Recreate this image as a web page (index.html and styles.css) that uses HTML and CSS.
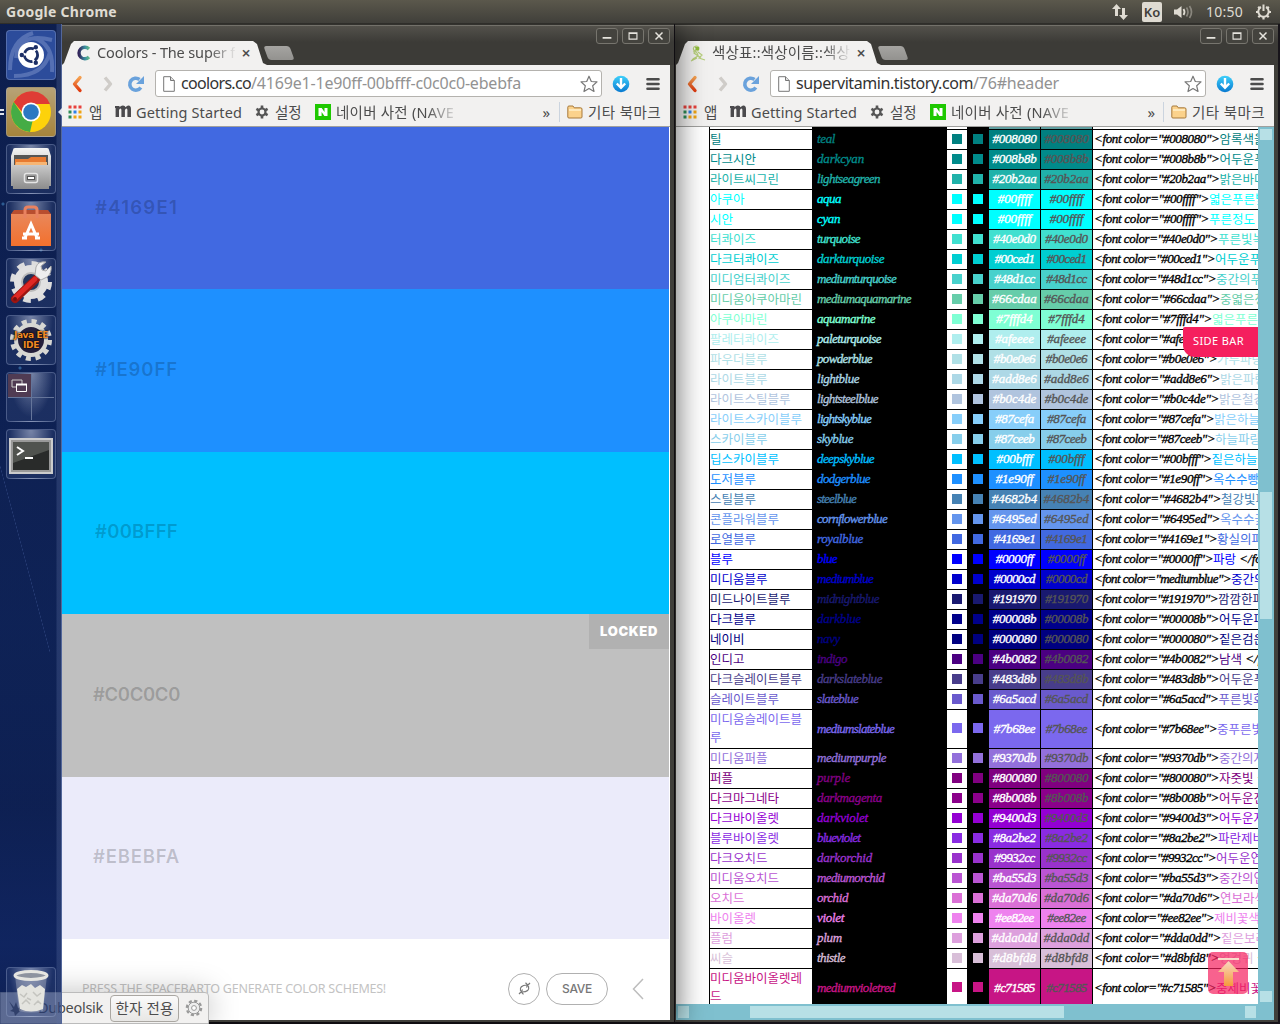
FILE: index.html
```html
<!DOCTYPE html>
<html lang="ko">
<head>
<meta charset="utf-8">
<title>Google Chrome</title>
<link rel="stylesheet" href="styles.css">
</head>
<body>
<svg class="defs" width="0" height="0">
  <defs>
    <linearGradient id="orange" x1="0" y1="0" x2="0" y2="1"><stop offset="0" stop-color="#f5a050"/><stop offset="1" stop-color="#e03c10"/></linearGradient>
    <linearGradient id="metal" x1="0" y1="0" x2="0" y2="1"><stop offset="0" stop-color="#f4f4f4"/><stop offset="1" stop-color="#9a9a9a"/></linearGradient>
    <linearGradient id="drawer" x1="0" y1="0" x2="0" y2="1"><stop offset="0" stop-color="#c9c9c9"/><stop offset="1" stop-color="#8c8c8c"/></linearGradient>
    <linearGradient id="bag" x1="0" y1="0" x2="0" y2="1"><stop offset="0" stop-color="#e9875a"/><stop offset="1" stop-color="#f3702d"/></linearGradient>
    <linearGradient id="arrow" x1="0" y1="0" x2="0" y2="1"><stop offset="0" stop-color="#f9e0d0"/><stop offset="1" stop-color="#f59a3c"/></linearGradient>
    <linearGradient id="cool" x1="0" y1="0" x2="1" y2="0"><stop offset="0" stop-color="#33265b"/><stop offset=".6" stop-color="#3b8fa0"/><stop offset="1" stop-color="#63b887"/></linearGradient>
    <linearGradient id="dl" x1="0" y1="0" x2="0" y2="1"><stop offset="0" stop-color="#3fd0fb"/><stop offset="1" stop-color="#0879d0"/></linearGradient>
  </defs>
  <symbol id="back" viewBox="0 0 12 18"><path d="M9 2.500 3.500 9 9 15.500" fill="none" stroke="url(#orange)" stroke-width="3.400" stroke-linecap="round" stroke-linejoin="round"/></symbol>
  <symbol id="fwd" viewBox="0 0 12 18"><path d="M3 2.500 8.500 9 3 15.500" fill="none" stroke="#cfccc8" stroke-width="3.400" stroke-linejoin="round"/></symbol>
  <symbol id="reload" viewBox="0 0 18 18"><path d="M13.800 12.500A6 6 0 1 1 12.500 4.500" fill="none" stroke="#6aa2dc" stroke-width="3.600"/><path d="M17 1v8H9z" fill="#6aa2dc"/></symbol>
  <symbol id="page" viewBox="0 0 12 16"><path d="M.7.7h6.800l3.800 3.800v10.800H.7z" fill="#fff" stroke="#777"/><path d="M7.500.7v3.800h3.800" fill="#ddd" stroke="#777"/></symbol>
  <symbol id="star" viewBox="0 0 18 18"><path d="m9 1.200 2.300 5.300 5.700.4-4.300 3.900 1.300 5.700L9 13.500l-5 3 1.300-5.700L1 6.900l5.700-.4z" fill="#fff" stroke="#777" stroke-width="1.200" stroke-linejoin="round"/></symbol>
  <symbol id="down" viewBox="0 0 18 18"><circle cx="9" cy="9" r="8.300" fill="url(#dl)"/><path d="M9 3v9M4.800 8.500 9 12.800l4.200-4.300" fill="none" stroke="#fff" stroke-width="2.400"/></symbol>
  <symbol id="menu" viewBox="0 0 14 14"><path d="M1.500 2.200h11M1.500 7h11M1.500 11.800h11" stroke="#4c4c4c" stroke-width="2.600" stroke-linecap="round"/></symbol>
  <symbol id="apps" viewBox="0 0 14 14"><path d="M.5.500h3v3h-3zM5.500.500h3v3h-3zM10.500.500h3v3h-3z" fill="#e8413b"/><path d="M.5 5.500h3v3h-3zM.5 10.500h3v3h-3z" fill="#2d8c56"/><path d="M5.500 5.500h3v3h-3z" fill="#2f80e8"/><path d="M10.500 5.500h3v3h-3zM5.500 10.500h3v3h-3zM10.500 10.500h3v3h-3z" fill="#f0a411"/></symbol>
  <symbol id="moz" viewBox="0 0 16 13"><path d="M0 1h4.500v1.300Q6 .5 8 .6q2 .1 2.600 1.700Q12 .5 13.500.6 16 .8 16 4v8h-3.600V5q0-1.500-1-1.500T9.900 5.200V12H6.400V5q0-1.500-1-1.500T4 5.200V12H.6V3H0z" fill="#4b4a4d"/></symbol>
  <symbol id="gear" viewBox="0 0 16 16"><path d="M8 1.500v3M8 11.500v3M2.400 4.800l2.600 1.500M11 9.700l2.600 1.500M2.400 11.200 5 9.700M11 6.300l2.600-1.500" stroke="#555" stroke-width="2.600"/><circle cx="8" cy="8" r="3.500" fill="none" stroke="#555" stroke-width="2.200"/></symbol>
  <symbol id="naver" viewBox="0 0 16 16"><path d="M0 0h16v16H0z" fill="#1ec800"/><path d="M3.500 4h3.200L9.500 8V4h3v8H9.400L6.600 8v4H3.500z" fill="#fff"/></symbol>
  <symbol id="folder" viewBox="0 0 16 14"><path d="M.8 12V2.200Q.8 1 2 1h4l1.200 1.800h6.300q1.500 0 1.500 1.300V12q0 1-1.200 1H2Q.8 13 .8 12z" fill="#fbd28c" stroke="#a77a3c"/><path d="M2 5h12" stroke="#fff0cd" stroke-width="1.500"/></symbol>
  <symbol id="min" viewBox="0 0 22 16"><path d="M6 10h10" stroke="#e6e4de" stroke-width="2"/></symbol>
  <symbol id="max" viewBox="0 0 22 16"><path d="M6.500 4.500h9v7h-9zM6 5.200h10" fill="none" stroke="#e6e4de" stroke-width="1.300"/></symbol>
  <symbol id="close" viewBox="0 0 22 16"><path d="m7 4 8 8m0-8-8 8" stroke="#e6e4de" stroke-width="1.700"/></symbol>
</svg>

<header class="panel">
  <b class="panel-title"><span data-w="111">Google Chrome</span></b>
  <div class="indicators">
    <svg width="18" height="18" viewBox="0 0 18 18"><path d="M5.500 1 10 6H7v7H4V6H1zM12.500 17 8 12h3V5h3v7h3z" fill="#dfdbd2"/></svg>
    <span class="lang">Ko</span>
    <svg width="21" height="16" viewBox="0 0 21 16"><path d="M1 5.500h3L8.500 2v12L4 10.500H1z" fill="#dfdbd2"/><path d="M10.500 5q2 3 0 6" stroke="#dfdbd2" stroke-width="1.800" fill="none"/><path d="M13.500 3.500q3 4.500 0 9M16.500 2q4 6 0 12" stroke="#8a877e" stroke-width="1.700" fill="none"/></svg>
    <span class="clock" data-w="37">10:50</span>
    <svg width="17" height="17" viewBox="0 0 17 17"><path d="M6 4a5.200 5.200 0 1 0 5 0M8.500 1.500V8" fill="none" stroke="#dfdbd2" stroke-width="2"/><path d="M1 9h2M14 9h2M3.200 3.700l1.500 1.500M13.800 3.700l-1.500 1.500M3.300 14.300l1.500-1.500M13.700 14.300l-1.500-1.500M8.500 14v2.500" stroke="#dfdbd2" stroke-width="2.200"/></svg>
  </div>
</header>

<section class="window window-left">
  <div class="titlebar">
    <div class="tab">
      <svg width="16" height="16" viewBox="0 0 16 16"><path d="M13 4A5.800 5.800 0 1 0 13 12" fill="none" stroke="url(#cool)" stroke-width="3.400"/></svg>
      <span class="tab-title"><span data-w="138">Coolors - The super f</span></span>
      <span class="tab-close">×</span>
    </div>
    <i class="new-tab"></i>
    <div class="controls"><svg><use href="#min"/></svg><svg><use href="#max"/></svg><svg><use href="#close"/></svg></div>
  </div>
  <div class="chrome">
    <div class="toolbar">
      <svg class="i-back"><use href="#back"/></svg><svg class="i-fwd"><use href="#fwd"/></svg><svg class="i-reload"><use href="#reload"/></svg>
      <div class="omnibox"><svg class="i-page"><use href="#page"/></svg><span class="host" data-w="70">coolors.co</span><span class="path" data-w="270">/4169e1-1e90ff-00bfff-c0c0c0-ebebfa</span><svg class="i-star"><use href="#star"/></svg></div>
      <svg class="i-down"><use href="#down"/></svg><svg class="i-menu"><use href="#menu"/></svg>
    </div>
    <nav class="bookmarks">
      <svg class="i-apps"><use href="#apps"/></svg><span class="b-apps">앱</span>
      <svg class="i-moz"><use href="#moz"/></svg><span class="b-start"><span data-w="106">Getting Started</span></span>
      <svg class="i-gear"><use href="#gear"/></svg><span class="b-set">설정</span>
      <svg class="i-naver"><use href="#naver"/></svg><span class="b-dict"><span data-w="118">네이버 사전 (NAVE</span></span>
      <span class="more">»</span><i class="divider"></i><svg class="i-folder"><use href="#folder"/></svg><span class="b-other" data-w="73">기타 북마크</span>
    </nav>
  </div>
  <main class="coolors">
    <div class="shade royal"><span data-w="83">#4169E1</span></div>
    <div class="shade dodger"><span data-w="83">#1E90FF</span></div>
    <div class="shade sky"><span data-w="83">#00BFFF</span></div>
    <div class="shade silver"><span data-w="87">#C0C0C0</span><b class="locked"><span data-w="58">LOCKED</span></b></div>
    <div class="shade lavender"><span data-w="87">#EBEBFA</span></div>
    <footer>
      <span class="hint"><span data-w="304">PRESS THE SPACEBARTO GENERATE COLOR SCHEMES!</span></span>
      <span class="round"><svg width="13" height="13" viewBox="0 0 13 13"><path d="M2.500 9Q1 3.500 9 3M7.500.8 9.800 3 8.500 5.500M10.500 4q1.500 6-6.500 6M5.500 12.300 3.200 10 4.500 7.500M1 12l2-2M10 3l2-2" fill="none" stroke="#777" stroke-width="1.200"/></svg></span>
      <span class="save"><span data-w="30">SAVE</span></span>
      <svg class="chevron" width="12" height="22" viewBox="0 0 12 22"><path d="M11 1 1.500 11 11 21" fill="none" stroke="#bdbdbd" stroke-width="1.500"/></svg>
    </footer>
  </main>
</section>

<section class="window window-right">
  <div class="titlebar">
    <div class="tab">
      <svg width="17" height="17" viewBox="0 0 17 17"><path d="M4 2q4-2 5 1 0 3-3 3Q2 5 4 2zM3 6q5 1 5 5-4 2-6 4M8 7l4 3-3 3 6 2M1 16l6-3M6 4l-2 4 7 5" fill="none" stroke="#b7cf7b" stroke-width="1.200"/><path d="M5 2h4v3H6z" fill="#8fbd3b"/></svg>
      <span class="tab-title"><span data-w="138">색상표::색상이름::색상</span></span>
      <span class="tab-close">×</span>
    </div>
    <i class="new-tab"></i>
    <div class="controls"><svg><use href="#min"/></svg><svg><use href="#max"/></svg><svg><use href="#close"/></svg></div>
  </div>
  <div class="chrome">
    <div class="toolbar">
      <svg class="i-back"><use href="#back"/></svg><svg class="i-fwd"><use href="#fwd"/></svg><svg class="i-reload"><use href="#reload"/></svg>
      <div class="omnibox"><svg class="i-page"><use href="#page"/></svg><span class="host" data-w="177">supervitamin.tistory.com</span><span class="path" data-w="86">/76#header</span><svg class="i-star"><use href="#star"/></svg></div>
      <svg class="i-down"><use href="#down"/></svg><svg class="i-menu"><use href="#menu"/></svg>
    </div>
    <nav class="bookmarks">
      <svg class="i-apps"><use href="#apps"/></svg><span class="b-apps">앱</span>
      <svg class="i-moz"><use href="#moz"/></svg><span class="b-start"><span data-w="106">Getting Started</span></span>
      <svg class="i-gear"><use href="#gear"/></svg><span class="b-set">설정</span>
      <svg class="i-naver"><use href="#naver"/></svg><span class="b-dict"><span data-w="118">네이버 사전 (NAVE</span></span>
      <span class="more">»</span><i class="divider"></i><svg class="i-folder"><use href="#folder"/></svg><span class="b-other" data-w="73">기타 북마크</span>
    </nav>
  </div>
  <main class="blog">
    <div class="blog-view"><div class="colors" id="colors"></div></div>
    <div class="vbar"><i class="v-up"></i><i class="v-thumb"></i><i class="v-down"></i></div>
    <div class="hbar"><i class="h-left"></i><i class="h-thumb"></i><i class="h-right"></i></div>
    <span class="sidebar-tag"><span data-w="51">SIDE BAR</span></span>
    <span class="to-top"><svg width="40" height="42" viewBox="0 0 40 42"><path d="M10 6h21v2H10zM20.500 9 31 20h-6v14h-9V20h-6z" fill="url(#arrow)"/></svg></span>
  </main>
</section>

<div class="ime">
  <svg class="ime-bird" width="20" height="20" viewBox="0 0 20 20"><path d="M1 3l5 6 2-5 2 6 8-3-7 7-4 4-1-4-4-1 3-2z" fill="#555"/></svg>
  <span class="ime-name" data-w="65">Dubeolsik</span>
  <span class="ime-button"><span data-w="58">한자 전용</span></span>
  <svg width="18" height="18" viewBox="0 0 18 18"><circle cx="9" cy="9" r="7.200" fill="none" stroke="#999" stroke-width="2.200" stroke-dasharray="3.200 2.450"/><circle cx="9" cy="9" r="5.800" fill="#eee" stroke="#999"/><circle cx="9" cy="9" r="2.400" fill="#fff" stroke="#999"/></svg>
</div>

<aside class="launcher">
  <div class="tile tile-dash"><svg viewBox="0 0 50 50"><path d="M4 40Q4 10 27 3M46 10Q12 2 10 28M46 42Q48 14 28 8M8 46q30 0 36-24" fill="none" stroke="#93a8d8" stroke-opacity=".4" stroke-width="4"/><circle cx="25" cy="25" r="13" fill="#fff"/><circle cx="25" cy="25" r="6.600" fill="none" stroke="#1c2f66" stroke-width="2.800" stroke-dasharray="11.300 2.500" stroke-dashoffset="5"/><g fill="#1c2f66"><circle cx="15.800" cy="25" r="2.200"/><circle cx="29.800" cy="17.200" r="2.200"/><circle cx="29.800" cy="32.800" r="2.200"/></g></svg></div>
  <div class="tile tile-chrome"><svg viewBox="0 0 50 50"><circle cx="25" cy="25" r="20" fill="#fdd20b"/><path d="M7.700 15A20 20 0 0 1 44 17H25q-8 1-8 9z" fill="#df3c35"/><path d="M7.700 15 18 30q4 4 9 2l-3 12.900A20 20 0 0 1 7.700 15z" fill="#45ac45"/><circle cx="25" cy="25" r="9.500" fill="#fff"/><circle cx="25" cy="25" r="7.800" fill="#2b78c2"/></svg></div>
  <div class="tile"><svg viewBox="0 0 50 50"><path d="M7 6q0-2 2-2h32q2 0 2 2l2 6v30H5V12z" fill="url(#metal)"/><path d="M8 11h34v12H8z" fill="#555"/><path d="M9 15h13l3-2h15v8H9z" fill="#e77a31"/><path d="M10 18h31v4H9z" fill="#f6b574"/><path d="M6 21h38l-1 24H7z" fill="url(#drawer)"/><rect x="18.500" y="29.500" width="13" height="9" rx="2" fill="#999" stroke="#e5e5e5" stroke-width="1.500"/><rect x="21.500" y="32.500" width="7" height="3" fill="#fff" stroke="#555"/></svg></div>
  <div class="tile"><svg viewBox="0 0 50 50"><path d="M5 13h40v32H5z" fill="url(#bag)"/><path d="M5 13l3-4h34l3 4z" fill="#b84e2f"/><path d="M19 17V9q0-3 3-3h6q3 0 3 3v8" fill="none" stroke="#e98260" stroke-width="3"/><path d="m18.500 38 6.500-15 6.500 15M17 33h16M16 37h5M29 37h5" fill="none" stroke="#fff" stroke-width="3"/></svg></div>
  <div class="tile"><svg viewBox="0 0 50 50"><circle cx="25" cy="24" r="18.500" fill="none" stroke="#ddd" stroke-width="5" stroke-dasharray="7.500 7.030"/><circle cx="25" cy="24" r="13" fill="none" stroke="#e1e1e1" stroke-width="8"/><circle cx="25" cy="24" r="9" fill="#23345a" stroke="#bbb" stroke-width="2"/><path d="M9 41 30 21" stroke="#9c1511" stroke-width="8" stroke-linecap="round"/><path d="M9 40 29 21" stroke="#df2824" stroke-width="5" stroke-linecap="round"/><circle cx="9" cy="41" r="2" fill="#741010"/><path d="m29 17 6 5 6-3q5-4 4-11l-5 5-4-1-1-4 5-4q-8-1-10 5z" fill="#eee" stroke="#aaa"/></svg></div>
  <div class="tile"><svg viewBox="0 0 50 50"><circle cx="25" cy="25" r="18.500" fill="none" stroke="#d7d7d3" stroke-width="5" stroke-dasharray="5 4.680"/><circle cx="25" cy="25" r="15" fill="#25203c" stroke="#d7d7d3" stroke-width="4"/></svg><b>Java EE<br>IDE</b></div>
  <div class="tile"><svg viewBox="0 0 50 50"><path d="M2 2h23v23H2z" fill="#503b53"/><path d="M25.500 2v46M2 25.500h46" stroke="#65759a"/><path d="M6 8h10v7H6z" fill="none" stroke="#ccc"/><path d="M10.500 12.500h10v7h-10z" fill="#503b53" stroke="#fff"/><path d="M10 12.500h11" stroke="#fff" stroke-width="2"/></svg></div>
  <div class="tile"><svg viewBox="0 0 50 50"><path d="M3 9h44v36H3z" fill="#ccc"/><path d="M5 11h40v32H5z" fill="#999"/><path d="M7 13h36v28H7z" fill="#292b2a"/><path d="M7 13h36v8L7 34z" fill="#50534f"/><path d="m11 18 6 4-6 4M19 29h8" fill="none" stroke="#fff" stroke-width="2"/></svg></div>
  <div class="tile tile-bin"><svg viewBox="0 0 50 50"><path d="M9 8h32l-4 36q-12 3-24 0z" fill="#c8ccd4" fill-opacity=".35"/><path d="m11 22 5-4 4 2 5-3 4 4 5-3 5 4-2 20q-12 5-23 0z" fill="#e4e4df"/><path d="m14 27 4 3 3-4M27 25l4 4 4-3M16 37l4-4 4 4M28 38l4-4 3 3M21 31l4 2" fill="none" stroke="#c4c4bf" stroke-width="1.500"/><ellipse cx="25" cy="8.500" rx="16" ry="4" fill="#8d939f" stroke="#e5e5e1" stroke-width="3"/></svg></div>
  <i class="run run-a"></i><i class="run run-b"></i><i class="active"></i>
</aside>
<script src="script.js"></script>
</body>
</html>
```

FILE: styles.css
```css
* { box-sizing: border-box; }
body { margin: 0; width: 1280px; height: 1024px; overflow: hidden; position: relative; background: #17141a; color: #4c4c4c; font-family: "Noto Sans", "Noto Sans CJK KR", sans-serif; font-size: 14.500px; white-space: nowrap; }
.defs { position: absolute; }
[data-w] { display: inline-block; white-space: pre; }
svg { flex: none; }

.panel { height: 24px; display: flex; align-items: center; justify-content: space-between; padding: 0 8px 0 6px; background: linear-gradient(#5b584c, #403f3a); border-bottom: 1px solid #2f2e2a; color: #dfdbd2; font-size: 14px; }
.panel-title { line-height: 20px; }
.indicators { display: flex; align-items: center; }
.lang { width: 20px; height: 20px; margin: 0 11px 0 13px; border-radius: 2px; background: #dfdbd2; color: #3f3e3a; font-size: 13px; font-weight: 600; line-height: 20px; text-align: center; }
.clock { margin: 0 12px 0 12px; }

.window { position: absolute; top: 24px; height: 998px; display: flex; flex-direction: column; background: #403f3a; }
.window-left { left: 61px; width: 613px; padding: 0 4px 2px 1px; z-index: 2; box-shadow: 0 0 26px 4px rgba(0,0,0,.55); clip-path: inset(0 -40px -4px 0); }
.window-right { left: 675px; width: 603px; padding: 0 4px 2px 1px; }
.titlebar { height: 41px; flex: none; display: flex; align-items: flex-end; margin: 0 -4px 0 -1px; padding-left: 1px; background: linear-gradient(#33322e 0 1px, #73716a 1px 2px, #53514b 2px, #3c3b37 18px); }
.tab { width: 205px; height: 24px; display: flex; align-items: center; padding-left: 14px; background: #f2f1f0; clip-path: polygon(0 100%, 2px 92%, 9px 12%, 12px 0, 191px 0, 195px 12%, 201px 92%, 205px 100%); }
.tab-title { width: 138px; margin-left: 5px; padding-bottom: 2px; overflow: hidden; -webkit-mask: linear-gradient(90deg, #000 112px, transparent 140px); mask: linear-gradient(90deg, #000 112px, transparent 140px); line-height: 22px; }
.tab-close { width: 16px; margin-left: 3px; text-align: center; font-size: 16px; font-weight: 600; line-height: 22px; }
.new-tab { width: 26px; height: 14px; margin: 0 0 5px -1px; background: linear-gradient(#a5a4a1, #93928f); border-radius: 3px; transform: skewX(20deg); }
.controls { display: flex; gap: 4px; margin: 0 4px 21px auto; }
.controls svg { width: 22px; height: 16px; border: 1px solid #77756e; border-radius: 3px; background: #44433e; }

.chrome { height: 62px; flex: none; background: #f2f1f0; border-bottom: 1px solid #a0a09e; }
.toolbar { height: 34px; display: flex; align-items: center; padding: 3px 10px 0 9px; }
.window-right .toolbar, .window-right .bookmarks { margin-left: 1px; }
.i-back, .i-fwd { width: 12px; height: 18px; }
.i-fwd { margin-left: 19px; }
.i-reload { width: 18px; height: 18px; margin: 0 10px 0 13px; }
.omnibox { flex: 1; height: 27px; display: flex; align-items: center; padding: 0 3px 0 7px; background: #fff; border: 1px solid #b4b2ae; border-radius: 3px; font-size: 16px; line-height: 22px; }
.i-page { width: 12px; height: 16px; margin-right: 6px; }
.host, .path { padding-bottom: 2px; }
.host { color: #333; }
.path { color: #929292; }
.i-star { width: 18px; height: 18px; margin-left: auto; }
.i-down { width: 18px; height: 18px; margin: 0 16px 0 10px; }
.i-menu { width: 14px; height: 14px; }
.bookmarks { height: 26px; display: flex; align-items: center; padding: 0 0 1px 6px; line-height: 22px; }
.i-apps { width: 14px; height: 14px; margin-right: 7px; }
.b-apps { width: 14px; margin-right: 12px; }
.i-moz { width: 16px; height: 13px; margin-right: 5px; }
.b-start { margin-right: 12px; }
.i-gear { width: 16px; height: 16px; margin-right: 5px; }
.b-set { width: 28px; margin-right: 12px; }
.i-naver { width: 16px; height: 16px; margin-right: 5px; }
.b-dict { width: 118px; overflow: hidden; -webkit-mask: linear-gradient(90deg, #000 90px, transparent 124px); mask: linear-gradient(90deg, #000 90px, transparent 124px); }
.more { margin-left: auto; font-size: 15px; }
.divider { width: 1px; height: 20px; margin: 0 7px 0 9px; background: #cbd4df; }
.window-right .divider { margin-left: 8px; }
.i-folder { width: 16px; height: 14px; margin-right: 5px; }
.b-other { margin-right: 9px; }

.coolors { flex: 1; display: grid; grid-template-rows: repeat(5, 162.400px) 1fr; padding-right: 1px; background: #fff; }
.shade { display: flex; align-items: center; padding: 0 0 3px 33px; position: relative; color: rgba(0,0,0,.2); font-family: Inter, sans-serif; font-size: 18.500px; font-weight: 600; }
.royal { background: #4169e1; }
.dodger { background: #1e90ff; }
.sky { background: #00bfff; }
.silver { background: #c0c0c0; padding-left: 31px; }
.lavender { background: #ebebfa; padding-left: 31px; }
.locked { position: absolute; top: 0; right: 0; width: 80px; height: 35px; background: rgba(0,0,0,.08); color: #fff; font-family: Inter, sans-serif; font-size: 13px; line-height: 34px; text-align: center; }
.coolors footer { display: flex; align-items: center; padding: 19px 25px 0 20px; }
.hint { flex: 1; font-size: 12.500px; color: #c3c3c3; }
.round, .save { height: 32px; border: 1px solid #b0b0b0; border-radius: 16px; display: flex; align-items: center; justify-content: center; }
.round { width: 32px; }
.save { width: 62px; margin: 0 24px 0 6px; color: #777; font: 500 12px Inter, sans-serif; }

.blog { flex: 1; min-height: 0; display: grid; grid-template: 877px 16px / 582px 16px; position: relative; background: #fff; border-right: 1px solid #eee; }
.blog-view { overflow: hidden; padding-left: 33px; }
.colors { border-left: 1px solid #000; font-size: 12.500px; font-family: "Noto Sans CJK KR", sans-serif; line-height: 19px; }
.row { display: grid; grid-template-columns: 102px 135px 20px 22px 52px 52px 300px; height: 20px; --c: #5f9ea0; }
.row.tall { height: 39px; }
.row.cut { height: 3px; }
.row > span { border-bottom: 1px solid #000; display: flex; align-items: center; overflow: hidden; }
.row .ko { display: block; color: var(--c); white-space: normal; word-break: break-all; line-height: 18px; }
.script { font: italic 400 13px/18px "Liberation Serif", serif; -webkit-text-stroke: .35px currentColor; }
.row .dark { background: #000; color: var(--c); padding: 0 0 1px 5px; }
.row .sw { justify-content: center; padding: 0 1px 1px 0; }
.row.cut .sw { padding: 0; }
.row .sw i { width: 10px; height: 10px; margin-bottom: 1px; background: var(--c); }
.row .black { background: #000; }
.row .hex { background: var(--c); border-right: 1px solid #000; padding-bottom: 1px; justify-content: center; color: #fff; }
.row .hex.grey { color: #555; }
.row .tag { padding: 0 0 1px 1px; color: #000; line-height: 18px; }
.tag .mean { color: var(--c); }
.vbar { background: #7fc0cf; display: flex; flex-direction: column; padding: 2px; }
.vbar i, .hbar i { background: #b7e0e6; }
.v-up, .v-down { height: 11px; }
.v-thumb { height: 127px; margin-top: 352px; }
.v-down { margin-top: auto; }
.hbar { grid-column: 1 / 3; background: #7fc0cf; display: flex; padding: 2px; }
.h-left, .h-right { width: 11px; }
.h-thumb { width: 314px; margin-left: 61px; }
.h-right { margin-left: auto; margin-right: 16px; }
.sidebar-tag { position: absolute; left: 507px; top: 200px; width: 75px; height: 30px; padding-left: 10px; border-radius: 2px 0 0 12px; background: #f51f5e; color: #fff; font-size: 11px; line-height: 28px; }
.to-top { position: absolute; left: 532px; top: 825px; width: 40px; height: 42px; border-radius: 5px; background: rgba(245,31,94,.7); }

.ime { position: absolute; z-index: 3; left: 0; top: 992px; width: 209px; height: 32px; display: flex; align-items: center; padding-left: 7px; background: #f2f1f0; border: 1px solid #bbb; border-radius: 0 4px 0 0; box-shadow: 0 0 30px rgba(0,0,0,.25); }
.ime-name { margin: 0 7px 2px 10px; }
.ime-button { width: 69px; height: 27px; margin-right: 6px; border: 1px solid #aaa7a2; border-radius: 4px; background: linear-gradient(#fafafa, #e8e7e5); line-height: 25px; text-align: center; }

.launcher { position: absolute; z-index: 4; left: 0; top: 24px; width: 62px; height: 1000px; padding: 6px; display: flex; flex-direction: column; gap: 7px; border-right: 1px solid #53679a; background: radial-gradient(circle at 3px 180px, #2c5b92 0 1px, transparent 2px), radial-gradient(circle at 41px 226px, #2c5b92 0 1px, transparent 2px), radial-gradient(circle at 20px 344px, #2c5b92 0 1px, transparent 2px), linear-gradient(90deg, transparent 56px, rgba(90,110,160,.3) 57px), linear-gradient(90deg, rgba(18,40,100,.67), rgba(18,40,100,.67)); }
body::before { content: ""; position: absolute; left: 0; top: 24px; width: 61px; height: 1000px; background: linear-gradient(75deg, transparent 49.500%, #54699c 50%, transparent 50.500%) 0 440px / 50px 190px no-repeat, linear-gradient(#030a22, #071638 60%, #050f2e 78%, #0c1e56 92%, #07133a); }
.tile { width: 50px; height: 50px; flex: none; position: relative; border: 1px solid rgba(160,175,210,.35); border-radius: 4px; background: radial-gradient(ellipse at 50% 0, rgba(190,200,225,.6), rgba(80,100,150,.22) 65%); }
.tile svg { position: absolute; left: -1px; top: -1px; width: 50px; height: 50px; }
.tile b { position: absolute; left: -5px; right: -5px; top: 14px; color: #f18a24; font: 700 9px/10px "DejaVu Sans", sans-serif; text-align: center; text-shadow: 0 0 2px #000, 0 0 2px #000; letter-spacing: -.4px; }
.tile-dash { background: #2c4c9b; }
.tile-chrome { background: linear-gradient(#b7a276, #a6843c); }
.tile-bin { margin-top: auto; margin-bottom: 1px; }
.run { position: absolute; left: 0; width: 4px; height: 2px; background: #dfe3ec; }
.run-a { top: 85px; }
.run-b { top: 89px; }
.active { position: absolute; left: 58px; top: 84px; border: 4px solid transparent; border-right-color: #dfe3ec; border-left: 0; }
```

FILE: script.js
```js
// hangul name | css name | hex | meaning | css name width | tag width
const rows = `틸|teal|008080|암록색을|18|125.5
다크시안|darkcyan|008b8b|어두운푸른|47|125.5
라이트씨그린|lightseagreen|20b2aa|밝은바다|63|125.5
아쿠아|aqua|00ffff|엷은푸른빛|24|115
시안|cyan|00ffff|푸른정도|23|115
터콰이즈|turquoise|40e0d0|푸른빛녹|43|124
다크터콰이즈|darkturquoise|00ced1|어두운푸른|67|121
미디엄터콰이즈|mediumturquoise|48d1cc|중간의푸른|79|122
미디움아쿠아마린|mediumaquamarine|66cdaa|중엷은청|94|126
아쿠아마린|aquamarine|7fffd4|엷은푸른|58|118
팔레터콰이즈|paleturquoise|afeeee|옅은청록|64|120
파우더블루|powderblue|b0e0e6|가루파랑|55|123
라이트블루|lightblue|add8e6|밝은파랑|42|126
라이트스틸블루|lightsteelblue|b0c4de|밝은철강|61|125
라이트스카이블루|lightskyblue|87cefa|밝은하늘|54|120
스카이블루|skyblue|87ceeb|하늘파랑|36|121
딥스카이블루|deepskyblue|00bfff|짙은하늘|57|117.5
도저블루|dodgerblue|1e90ff|옥수수빵|53|119
스틸블루|steelblue|4682b4|철강빛파|39|127
콘플라워블루|cornflowerblue|6495ed|옥수수꽃|70|126
로열블루|royalblue|4169e1|황실의파|46|123
블루|blue|0000ff|파랑|20|119
미디움블루|mediumblue|0000cd|중간의파|56|137
미드나이트블루|midnightblue|191970|깜깜한파|62|124
다크블루|darkblue|00008b|어두운파|44|125
네이비|navy|000080|짙은검은|23|125
인디고|indigo|4b0082|남색|30|125
다크슬레이트블루|darkslateblue|483d8b|어두운푸|65|125
슬레이트블루|slateblue|6a5acd|푸른빛회|41|124.5
미디움슬레이트블루|mediumslateblue|7b68ee|중푸른빛|77|123
미디움퍼플|mediumpurple|9370db|중간의자|69|125
퍼플|purple|800080|자줏빛|33|125
다크마그네타|darkmagenta|8b008b|어두운진|65|125
다크바이올렛|darkviolet|9400d3|어두운자|51|125
블루바이올렛|blueviolet|8a2be2|파란제비|43|124
다크오치드|darkorchid|9932cc|어두운연|55|122
미디움오치드|mediumorchid|ba55d3|중간의연|67|125
오치드|orchid|da70d6|연보라색|31|126
바이올렛|violet|ee82ee|제비꽃색|27|120
플럼|plum|dda0dd|짙은보라|25|127
씨슬|thistle|d8bfd8|엉겅퀴|28|125
미디움바이올렛레드|mediumvioletred|c71585|중제비꽃|78|122`.split('\n').map(r => r.split('|'));

const cells = '<span class="ko"></span><span class="dark"></span><span class="sw"></span><span class="sw black"></span><span class="hex"></span><span class="hex"></span><span class="tag"></span>';
let html = `<div class="row cut">${cells}</div>`;
for (const [ko, name, hex, mean, nameW, tagW] of rows) {
  const key = name === 'mediumblue' ? name : '#' + hex;
  const hexW = name === 'mediumblue' ? 41 : tagW - 81.5;
  html += `<div class="row${ko.length > 8 ? ' tall' : ''}" style="--c:#${hex}">
    <span class="ko">${ko}</span>
    <span class="dark script"><span data-w="${nameW}">${name}</span></span>
    <span class="sw"><i></i></span><span class="sw black"><i></i></span>
    <span class="hex script"><span data-w="${hexW}">#${hex}</span></span>
    <span class="hex grey script"><span data-w="${hexW}">#${hex}</span></span>
    <span class="tag"><span class="script" data-w="${tagW}">&lt;font color="${key}"&gt;</span><span class="mean">${mean}</span><span class="script">&nbsp;&lt;/font&gt;</span></span>
  </div>`;
}
document.getElementById('colors').innerHTML = html;

// Spread the letters of each label over its nominal width.
for (const el of document.querySelectorAll('[data-w]')) {
  const gap = (el.dataset.w - el.getBoundingClientRect().width) / el.textContent.length;
  el.style.letterSpacing = gap.toFixed(3) + 'px';
}
```
